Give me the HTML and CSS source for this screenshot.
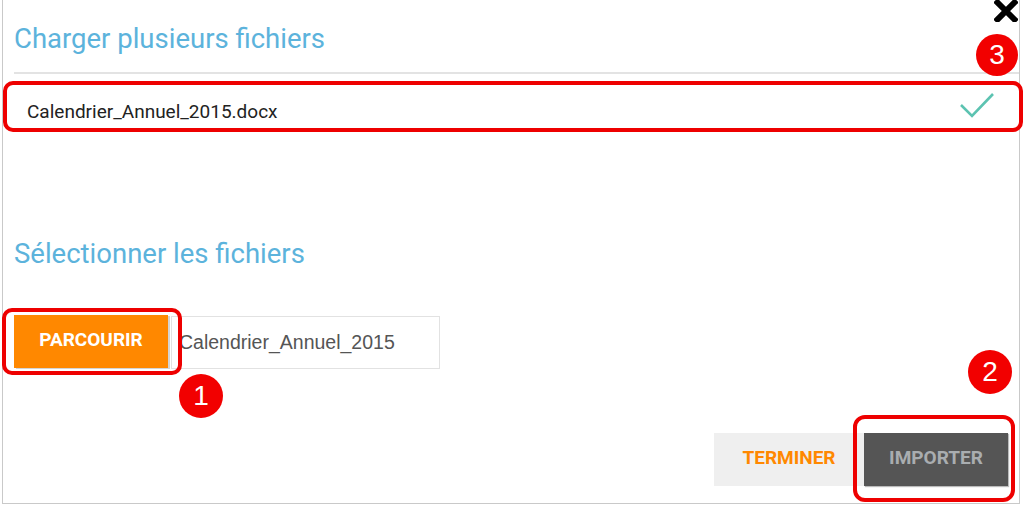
FILE: index.html
```html
<!DOCTYPE html>
<html lang="fr">
<head>
<meta charset="utf-8">
<title>Charger plusieurs fichiers</title>
<link rel="stylesheet" href="styles.css">
</head>
<body>
<div class="dialog">
  <button class="close" aria-label="Fermer">
    <svg width="24" height="22" viewBox="0 0 24 22"><path d="M3.5 2.5 L20.5 19.5 M20.5 2.5 L3.5 19.5" stroke="#000" stroke-width="6" stroke-linecap="square"/></svg>
  </button>
  <h2 class="title">Charger plusieurs fichiers</h2>
  <div class="rule"></div>
  <div class="file-row">
    <span class="file-name">Calendrier_Annuel_2015.docx</span>
    <svg class="check" width="34" height="26" viewBox="0 0 34 26"><polyline points="1,12 12,23 33,1" fill="none" stroke="#5cc3b1" stroke-width="2.6"/></svg>
  </div>
  <h2 class="title section">Sélectionner les fichiers</h2>
  <div class="picker">
    <button class="btn btn-browse">PARCOURIR</button>
    <div class="file-input">Calendrier_Annuel_2015</div>
  </div>
  <div class="actions">
    <button class="btn btn-finish">TERMINER</button>
    <button class="btn btn-import">IMPORTER</button>
  </div>
</div>

<div class="mark box-file"></div>
<div class="mark box-browse"></div>
<div class="mark box-import"></div>
<div class="badge badge-1">1</div>
<div class="badge badge-2">2</div>
<div class="badge badge-3">3</div>
</body>
</html>
```
FILE: styles.css
```css
* { box-sizing: border-box; }
html, body { margin: 0; padding: 0; background: #fff; }
body { width: 1024px; height: 507px; overflow: hidden; font-family: Roboto, "Liberation Sans", sans-serif; }

.dialog {
  position: relative;
  margin-left: 2px;
  width: 1018px;
  height: 504px;
  border: 1px solid #c9c9c9;
  border-top: none;
  padding-left: 11px;
}

.close {
  position: absolute;
  top: 0;
  right: 1px;
  padding: 0;
  border: 0;
  background: none;
  line-height: 0;
}

.title {
  margin: 0;
  padding-top: 22px;
  font: 400 27.5px/34px Roboto, sans-serif;
  color: #5cb3dc;
}
.title.section { padding-top: 0; margin-top: 105px; }

.rule { height: 2px; background: #e3e3e3; margin-top: 16px; }

.file-row {
  margin-top: 18px;
  height: 40px;
  display: flex;
  align-items: center;
  justify-content: space-between;
  padding-left: 13px;
  padding-right: 25px;
}
.file-name { font: 400 19px/20px Roboto, sans-serif; color: #222; }
.check { margin-bottom: 12px; }

.picker { display: flex; margin-top: 44px; align-items: flex-start; }
.btn {
  border: 0;
  font: 700 19px/20px Roboto, sans-serif;
  padding: 0 0 4px;
  height: 53px;
}
.btn-browse {
  width: 154px;
  background: #ff8800;
  color: #fff;
  box-shadow: 2px 1px 0 #d4d4d4;
}
.file-input {
  margin-left: 3px;
  margin-top: 1px;
  width: 269px;
  height: 53px;
  border: 1px solid #e2e2e2;
  padding-left: 7px;
  display: flex;
  align-items: center;
  font: 400 19.5px "Liberation Sans", Arial, sans-serif;
  color: #555;
}

.actions {
  display: flex;
  justify-content: flex-end;
  margin-top: 64px;
  padding-right: 11px;
}
.btn-finish { width: 150px; background: #efefef; color: #ff8800; }
.btn-import { width: 144px; background: #555; color: #a9adb0; box-shadow: 1px 1px 1px #bbb; }

.mark {
  position: absolute;
  border: 4px solid #ee0000;
  border-radius: 10px;
}
.box-file { left: 3px; top: 81px; width: 1020px; height: 51px; }
.box-browse { left: 2px; top: 308px; width: 180px; height: 67px; }
.box-import { left: 853px; top: 415px; width: 162px; height: 87px; border-radius: 12px; }

.badge {
  position: absolute;
  width: 44px;
  height: 44px;
  border-radius: 50%;
  background: #f20000;
  color: #fff;
  display: flex;
  align-items: center;
  justify-content: center;
  font: 400 28px "Liberation Sans", Arial, sans-serif;
}
.badge-1 { left: 179px; top: 374px; }
.badge-2 { left: 968px; top: 350px; }
.badge-3 { left: 976px; top: 34px; width: 42px; height: 42px; }
```
